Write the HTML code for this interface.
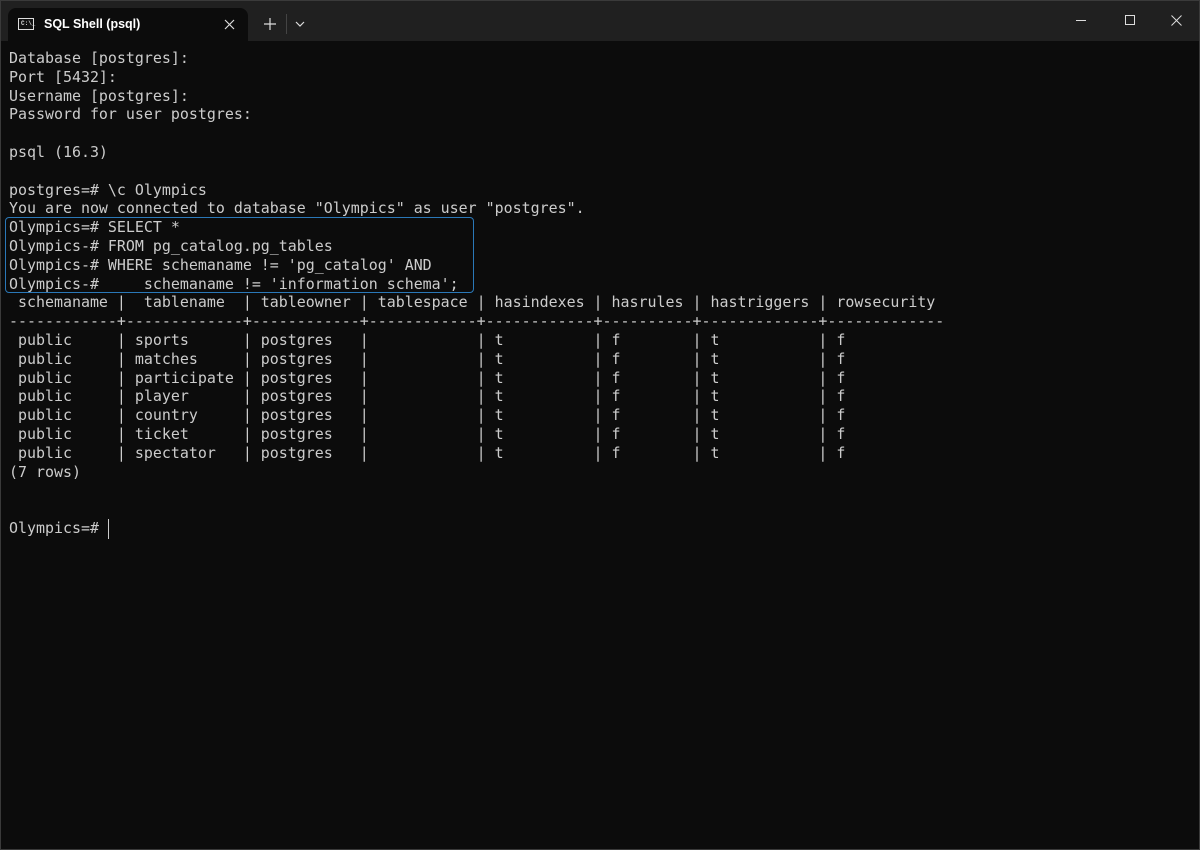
<!DOCTYPE html>
<html><head><meta charset="utf-8"><style>
*{margin:0;padding:0;box-sizing:border-box}
html,body{width:1200px;height:850px;overflow:hidden;background:#0c0c0c}
.title{position:absolute;left:0;top:0;width:1200px;height:41px;background:#202020}
.tab{position:absolute;left:8px;top:8px;width:240px;height:33px;background:#0c0c0c;border-radius:8px 8px 0 0}
.tab .t{position:absolute;left:36px;top:9px;font:600 12.5px "Liberation Sans",sans-serif;color:#fff}
.tab .ic{position:absolute;left:10px;top:10px;width:16px;height:12px;border:1px solid #ddd;background:#111}
.tab .ic span{position:absolute;left:2px;top:1px;font:bold 6px "Liberation Mono",monospace;color:#ddd}
pre{position:absolute;left:9px;top:49px;font:14.95px/18.8px "DejaVu Sans Mono","Liberation Mono",monospace;color:#cccccc}
.sel{position:absolute;left:5px;top:217px;width:469px;height:76px;border:1px solid #2a78b8;border-radius:4px}
.cur{position:absolute;left:108px;top:519px;width:1px;height:20px;background:#ccc}
.frame{position:absolute;left:0;top:0;width:1200px;height:850px;border:1px solid #3a3a3a;pointer-events:none}
</style></head><body>
<div class="title">
<div class="tab"><div class="ic"><span>C:\_</span></div><div class="t">SQL Shell (psql)</div>
<svg style="position:absolute;left:216px;top:11px" width="11" height="11"><path d="M1 1L10 10M10 1L1 10" stroke="#ddd" stroke-width="1.2"/></svg></div>
<svg style="position:absolute;left:264px;top:18px" width="12" height="12"><path d="M6 0V12M0 6H12" stroke="#ddd" stroke-width="1.2"/></svg>
<div style="position:absolute;left:286px;top:14px;width:1px;height:20px;background:#444"></div>
<svg style="position:absolute;left:295px;top:21px" width="10" height="6"><path d="M1 1L5 5L9 1" stroke="#ddd" fill="none" stroke-width="1.2"/></svg>
<div style="position:absolute;left:1076px;top:20px;width:10px;height:1px;background:#ddd"></div>
<div style="position:absolute;left:1125px;top:15px;width:10px;height:10px;border:1px solid #ddd"></div>
<svg style="position:absolute;left:1171px;top:15px" width="11" height="11"><path d="M0.5 0.5L10.5 10.5M10.5 0.5L0.5 10.5" stroke="#ddd" stroke-width="1"/></svg>
</div>
<pre>Database [postgres]:
Port [5432]:
Username [postgres]:
Password for user postgres:

psql (16.3)

postgres=# \c Olympics
You are now connected to database "Olympics" as user "postgres".
Olympics=# SELECT *
Olympics-# FROM pg_catalog.pg_tables
Olympics-# WHERE schemaname != 'pg_catalog' AND
Olympics-#     schemaname != 'information_schema';
 schemaname |  tablename  | tableowner | tablespace | hasindexes | hasrules | hastriggers | rowsecurity
------------+-------------+------------+------------+------------+----------+-------------+-------------
 public     | sports      | postgres   |            | t          | f        | t           | f
 public     | matches     | postgres   |            | t          | f        | t           | f
 public     | participate | postgres   |            | t          | f        | t           | f
 public     | player      | postgres   |            | t          | f        | t           | f
 public     | country     | postgres   |            | t          | f        | t           | f
 public     | ticket      | postgres   |            | t          | f        | t           | f
 public     | spectator   | postgres   |            | t          | f        | t           | f
(7 rows)


Olympics=# </pre>
<div class="sel"></div>
<div class="cur"></div>
<div class="frame"></div>
</body></html>
